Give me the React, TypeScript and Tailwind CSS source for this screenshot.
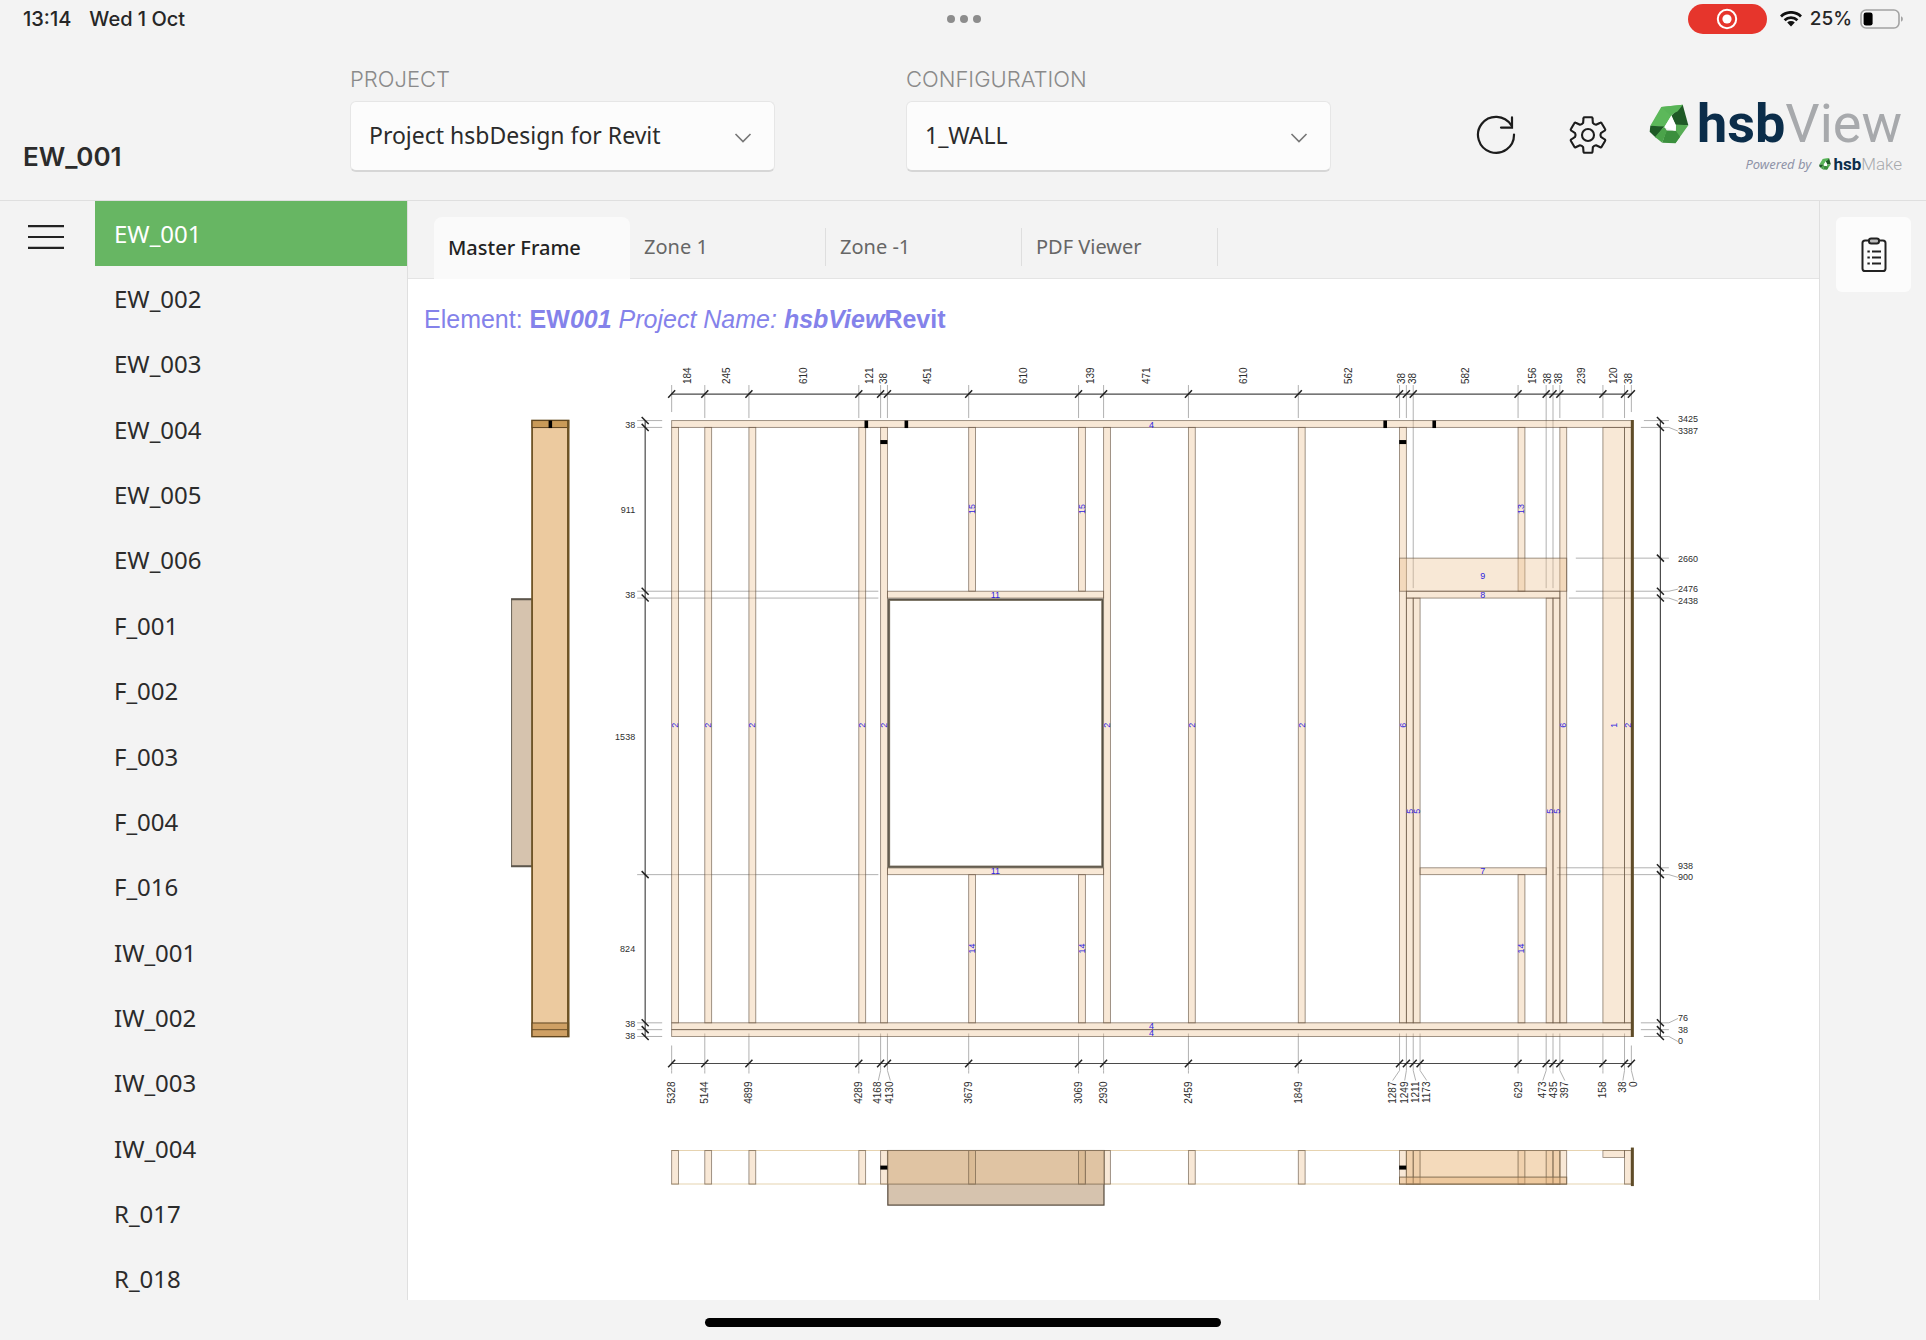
import React from "react";

const ELEMENTS = [
  "EW_001", "EW_002", "EW_003", "EW_004", "EW_005", "EW_006",
  "F_001", "F_002", "F_003", "F_004", "F_016",
  "IW_001", "IW_002", "IW_003", "IW_004", "R_017", "R_018",
];

const TABS = ["Zone 1", "Zone -1", "PDF Viewer"];

/* ---------- icons ---------- */

function WifiIcon() {
  return (
    <svg viewBox="0 0 22 16" className="h-4 w-[22px]" aria-hidden="true">
      <g fill="none" stroke="#111" strokeWidth="2.8">
        <path d="M1 5.4A14.4 14.4 0 0 1 21 5.4" />
        <path d="M4.6 9.2A9.2 9.2 0 0 1 17.4 9.2" />
      </g>
      <path d="M7.2 11.6A5.6 5.6 0 0 1 14.8 11.6L11 15.6Z" fill="#111" />
    </svg>
  );
}

function BatteryIcon() {
  return (
    <svg viewBox="0 0 44 20" className="h-5 w-11" aria-hidden="true">
      <rect x="1" y="1" width="38" height="18" rx="5" fill="none" stroke="#a3a3a3" strokeWidth="1.6" />
      <rect x="3.6" y="3.4" width="9" height="13.2" rx="2.4" fill="#000" />
      <path d="M41 7.2a3 3 0 0 1 0 5.6z" fill="#a3a3a3" />
    </svg>
  );
}

function RefreshIcon() {
  return (
    <svg viewBox="0 0 40 40" className="size-10" fill="none" stroke="#1c1c1c" strokeWidth="2.2" strokeLinecap="round" aria-hidden="true">
      <path d="M38 19.5A18 18 0 1 1 35.2 10.2" />
      <path d="M36 2.4V12.6H25" />
    </svg>
  );
}

function gearPath() {
  const pts: string[] = [];
  const at = (r: number, deg: number) => {
    const a = (deg * Math.PI) / 180;
    return `${(20 + r * Math.cos(a)).toFixed(2)} ${(20 + r * Math.sin(a)).toFixed(2)}`;
  };
  for (let k = 0; k < 6; k++) {
    const c = -90 + 60 * k;
    pts.push(
      `${k === 0 ? "M" : "L"}${at(13, c - 22)}`,
      `L${at(17.4, c - 15)}`,
      `Q${at(18.4, c - 14)} ${at(18, c - 10)}`,
      `L${at(18, c + 10)}`,
      `Q${at(18.4, c + 14)} ${at(17.4, c + 15)}`,
      `L${at(13, c + 22)}`,
      `Q${at(12, c + 30)} ${at(13, c + 38)}`,
    );
  }
  return pts.join("") + "Z";
}

function GearIcon() {
  return (
    <svg viewBox="0 0 40 40" className="size-10" fill="none" stroke="#1c1c1c" strokeWidth="2.1" strokeLinejoin="round" aria-hidden="true">
      <path d={gearPath()} />
      <circle cx="20" cy="20" r="6" />
    </svg>
  );
}

function ChecklistIcon() {
  return (
    <svg viewBox="0 0 26 36" className="h-9 w-[26px]" fill="none" stroke="#222" strokeWidth="2" aria-hidden="true">
      <rect x="1.5" y="3.5" width="23" height="30.5" rx="2.6" />
      <rect x="8" y="1.4" width="10" height="5" rx="2.2" fill="#bbb" />
      <path d="M11 14.5h9M11 20.5h9M11 26.5h9" />
      <path d="M6.4 14.5h2.4M6.4 20.5h2.4M6.4 26.5h2.4" />
    </svg>
  );
}

function Mark({ className }: { className: string }) {
  return (
    <svg viewBox="38 56 121 121" className={className} aria-hidden="true">
      <path d="M75 65L140 58L105 92L84 126L42 122Z" fill="#5cb85a" />
      <path d="M140 58L157 120L120 120L105 92Z" fill="#1f5a26" />
      <path d="M140 58L125 78L108 86L105 92L75 65Z" fill="#58b457" />
      <path d="M157 120L118 175L100 140L119 137L120 118Z" fill="#57ad55" />
      <path d="M90 136L119 137L132 155L118 175L78 173Z" fill="#3b8f3d" />
      <path d="M42 122L84 124L58 157L40 140Z" fill="#1f5a26" />
      <path d="M84 124L92 137L78 173L56 156Z" fill="#4ba34a" />
      <path d="M106 90L119 122L119 138L84 127Z" fill="#fff" />
    </svg>
  );
}

function Logo() {
  return (
    <div className="flex flex-col items-end font-[Roboto,sans-serif] leading-none">
      <div className="flex items-center gap-2">
        <Mark className="size-10" />
        <div className="text-[54px] leading-[48px] text-[#a7a9ac]">
          <span className="font-bold text-[#0b2d4a]">hsb</span>
          <span className="font-normal">View</span>
        </div>
      </div>
      <div className="mt-2 flex items-center gap-2">
        <span className="font-['Noto_Sans',sans-serif] text-[13px] leading-4 text-[#8f93a8] italic">Powered by</span>
        <div className="flex items-center gap-[2px]">
          <Mark className="size-3" />
          <div className="text-[17px] leading-4 text-[#a7a9ac]">
            <span className="font-bold text-[#0b2d4a]">hsb</span>
            <span className="font-light">Make</span>
          </div>
        </div>
      </div>
    </div>
  );
}

/* ---------- header parts ---------- */

function Picker({ id, label, value }: { id: string; label: string; value: string }) {
  return (
    <div className="w-[425px]">
      <label htmlFor={id} className="block font-[Inter,sans-serif] text-[22px] leading-7 font-light text-[#8a8a8a]">
        {label}
      </label>
      <div className="relative mt-2">
        <select
          id={id}
          className="h-[71px] w-full appearance-none rounded-md border border-b-2 border-[#e6e6e6] border-b-[#d6d6d6] bg-[#fcfcfc] px-[18px] pb-[2px] text-[23px] text-[#2b2b2b]"
        >
          <option>{value}</option>
        </select>
        <svg viewBox="0 0 18 10" className="pointer-events-none absolute top-8 right-[23px] h-[10px] w-[18px]" fill="none" stroke="#777" strokeWidth="1.6" aria-hidden="true">
          <path d="M1.5 1L9 8.6L16.5 1" />
        </svg>
      </div>
    </div>
  );
}

/* ---------- drawing ---------- */

/* Millimetres on the wall to units of the drawing sheet. */
const X = (mm: number) => 1630.5 - 0.18 * mm;
const Y = (mm: number) => 1036 - 0.1797 * mm;

const WOOD = "rgba(236,190,140,0.36)";
const EDGE = "rgba(95,78,60,0.66)";

function Beam({ l, r, t, b }: { l: number; r: number; t: number; b: number }) {
  return <rect x={X(l)} y={Y(t)} width={X(r) - X(l)} height={Y(b) - Y(t)} fill={WOOD} stroke={EDGE} strokeWidth="0.9" />;
}

const GRID = [5328, 5144, 4899, 4289, 4168, 4130, 3679, 3069, 2930, 2459, 1849, 1287, 1249, 1211, 629, 473, 435, 397, 158, 38, 0];
const TOP_LABELS: [number, string][] = [
  [688, "184"], [727, "245"], [804, "610"], [870, "121"], [884, "38"], [928, "451"], [1024, "610"],
  [1091, "139"], [1146, "471"], [1243, "610"], [1348, "562"], [1401, "38"], [1412, "38"], [1465, "582"],
  [1532, "156"], [1547, "38"], [1558, "38"], [1581, "239"], [1613, "120"], [1628, "38"],
];
const BOTTOM: [number, number][] = [
  [5328, 672], [5144, 705], [4899, 749], [4289, 859], [4168, 878], [4130, 890], [3679, 969], [3069, 1079],
  [2930, 1104], [2459, 1188], [1849, 1298], [1287, 1392], [1249, 1404], [1211, 1415], [1173, 1426],
  [629, 1518], [473, 1542], [435, 1553], [397, 1564], [158, 1602], [38, 1622], [0, 1633],
];
const LEFT_MARKS: [number, number][] = [[3425, 662], [3387, 662], [2476, 878], [2438, 878], [900, 878], [76, 662], [38, 662], [0, 662]];
const LEFT_LABELS: [number, string][] = [[425, "38"], [510, "911"], [595, "38"], [737, "1538"], [949, "824"], [1024, "38"], [1036, "38"]];
const RIGHT: [number, number, number][] = [
  [3425, 1643, 419], [3387, 1640, 431], [2660, 1575, 559], [2476, 1575, 589], [2438, 1568, 601],
  [938, 1556, 866], [900, 1556, 877], [76, 1640, 1018], [38, 1640, 1030], [0, 1643, 1041],
];
const STUDS = [5328, 5144, 4899, 4289, 4168, 2930, 2459, 1849, 38];
const UPRIGHT_TAGS: [number, number, string][] = [
  ...STUDS.map((s): [number, number, string] => [X(s - 19), 725, "2"]),
  [X(3660), 509, "15"], [X(3050), 509, "15"], [X(610), 509, "13"],
  [X(3660), 948, "14"], [X(3050), 948, "14"], [X(610), 948, "14"],
  [X(1268), 725, "6"], [X(378), 725, "6"], [1613, 725, "1"],
  [1409, 811, "5"], [1416, 811, "5"], [1549, 811, "5"], [1556, 811, "5"],
];
const FLAT_TAGS: [number, number, string][] = [
  [1151, 425, "4"], [1151, 1026, "4"], [1151, 1033, "4"], [995, 595, "11"], [995, 871, "11"],
  [1482, 576, "9"], [1482, 595, "8"], [1482, 871, "7"],
];

function WallDrawing() {
  return (
    <svg viewBox="408 356 1410 860" className="block h-auto w-full font-['Liberation_Sans',Arial,sans-serif]" role="img" aria-label="Wall EW001 framing elevation">
      {/* side view */}
      <rect x="511.5" y="599" width="20.5" height="267" fill="#d6c3ae" stroke="#6b6257" strokeWidth="1" />
      <path d="M511 599H532M511 866H532" stroke="#5c564c" strokeWidth="2" />
      <rect x="532" y="420.5" width="36.5" height="615.5" fill="#ecca9f" stroke="#6f5426" strokeWidth="1.8" />
      <rect x="532" y="420.5" width="36.5" height="7" fill="#c99a58" stroke="#5e4520" />
      <rect x="532" y="1022.5" width="36.5" height="13.5" fill="#cfa064" stroke="#5e4520" />
      <path d="M532 1029.2H568.5" stroke="#5e4520" strokeWidth="0.9" />
      <path d="M567.8 421V1036" stroke="#6f5426" strokeWidth="1.8" />
      <rect x="548.5" y="420.5" width="3.5" height="7.5" fill="#000" />

      {/* extension lines */}
      <g stroke="#a8a8a8" strokeWidth="0.9" fill="none">
        {GRID.map((g) => (
          <path key={g} d={`M${X(g)} 385V${g === 5328 || g === 0 ? 412 : g === 1211 || g === 473 || g === 435 ? 588 : 418}`} />
        ))}
        {BOTTOM.map(([g, lx]) => (
          <path key={g} d={`M${X(g)} ${g === 5328 || g === 0 ? 1045 : 1033}V1070${Math.abs(lx - X(g)) > 1.6 ? `L${lx} 1080` : "V1073"}`} />
        ))}
        {LEFT_MARKS.map(([v, e]) => (
          <path key={v} d={`M637 ${Y(v)}H${e}`} />
        ))}
        {RIGHT.map(([v, s, ly]) => (
          <path key={v} d={`M${s} ${Y(v)}H1668${Math.abs(ly - Y(v)) > 1.6 ? `L1677 ${ly}` : ""}`} />
        ))}
      </g>

      {/* dimension lines with slashes */}
      <g stroke="#4a4a4a" strokeWidth="1.2">
        <path d={`M${X(5328)} 394H${X(0)}M${X(5328)} 1063H${X(0)}M645 ${Y(3425)}V${Y(0)}M1659.5 ${Y(3425)}V${Y(0)}`} />
      </g>
      <g stroke="#222" strokeWidth="1.5">
        {GRID.map((g) => (
          <path key={g} d={`M${X(g) - 3.5} 397.7l7 -7.4`} />
        ))}
        {BOTTOM.map(([g]) => (
          <path key={g} d={`M${X(g) - 3.5} 1066.7l7 -7.4`} />
        ))}
        {LEFT_MARKS.map(([v]) => (
          <path key={v} d={`M641.5 ${Y(v) - 3.5}l7 7`} />
        ))}
        {RIGHT.map(([v]) => (
          <path key={v} d={`M1656 ${Y(v) - 3.5}l7 7`} />
        ))}
      </g>

      {/* timbers */}
      <Beam l={5328} r={0} t={3425} b={3387} />
      <Beam l={5328} r={0} t={76} b={38} />
      <Beam l={5328} r={0} t={38} b={0} />
      {STUDS.map((s) => (
        <Beam key={s} l={s} r={s - 38} t={3387} b={76} />
      ))}
      {[1287, 397].map((s) => (
        <Beam key={s} l={s} r={s - 38} t={3387} b={76} />
      ))}
      {[3679, 3069, 629].map((s) => (
        <g key={s}>
          <Beam l={s} r={s - 38} t={3387} b={2476} />
          <Beam l={s} r={s - 38} t={900} b={76} />
        </g>
      ))}
      {[1249, 1211, 473, 435].map((s) => (
        <Beam key={s} l={s} r={s - 38} t={2438} b={76} />
      ))}
      <Beam l={4130} r={2930} t={2476} b={2438} />
      <Beam l={4130} r={2930} t={938} b={900} />
      <Beam l={1287} r={359} t={2660} b={2476} />
      <Beam l={1249} r={397} t={2476} b={2438} />
      <Beam l={1173} r={473} t={938} b={900} />
      <Beam l={158} r={38} t={3387} b={76} />
      <rect x="888.5" y="599.5" width="213.5" height="267" fill="none" stroke="#82796a" strokeWidth="2.6" />
      <rect x="888.5" y="599.5" width="213.5" height="267" fill="none" stroke="#4d463b" strokeWidth="0.8" />
      <path d="M1631.5 420V1036.5" stroke="#5f4c28" strokeWidth="3" />

      {/* holes */}
      <g fill="#000">
        {[866, 906, 1384.5, 1433.5].map((x) => (
          <rect key={x} x={x - 1.8} y="420.5" width="3.6" height="7.5" />
        ))}
        {[883.5, 1402].map((x) => (
          <rect key={x} x={x - 3.5} y="440" width="7" height="4" />
        ))}
      </g>

      {/* plan view */}
      <path d="M671 1150H1631M671 1183.5H1631" stroke="#e6d3b0" strokeWidth="1" />
      {[5328, 5144, 4899, 4289, 4168, 2930, 2459, 1849, 1287, 397, 38].map((s) => (
        <rect key={s} x={X(s)} y="1150" width="6.8" height="33.5" fill={WOOD} stroke={EDGE} strokeWidth="0.9" />
      ))}
      <rect x="887.5" y="1150" width="216" height="54.5" fill="#d6c3ae" stroke="#55493b" strokeWidth="1.2" />
      <rect x="887.5" y="1150" width="216" height="33.5" fill="#e0c4a3" stroke="#8b765c" strokeWidth="0.9" />
      {[3679, 3069].map((s) => (
        <rect key={s} x={X(s)} y="1150" width="6.8" height="33.5" fill="rgba(205,165,120,0.3)" stroke="#8b765c" strokeWidth="0.9" />
      ))}
      <path d={`M${X(3031)} 1150V1183.5`} stroke="#8b765c" strokeWidth="0.9" />
      <rect x={X(1249)} y="1150" width={X(397) - X(1249)} height="33.5" fill="#f4dabb" stroke="#8b765c" strokeWidth="0.9" />
      {[1249, 1211, 473, 435, 629].map((s) => (
        <rect key={s} x={X(s)} y="1150" width="6.8" height="33.5" fill="rgba(225,175,120,0.2)" stroke="#8b765c" strokeWidth="0.9" />
      ))}
      <rect x={X(1287)} y="1176.5" width={X(359) - X(1287)} height="7" fill="rgba(230,175,115,0.4)" stroke="#7a664c" strokeWidth="0.9" />
      <rect x={X(158)} y="1150" width="21.6" height="7" fill={WOOD} stroke={EDGE} strokeWidth="0.8" />
      <path d="M1631.5 1147V1185.5" stroke="#5f4c28" strokeWidth="3" />
      <rect x="880" y="1165" width="7" height="4" fill="#000" />
      <rect x="1398.5" y="1165" width="7" height="4" fill="#000" />

      {/* dimension texts */}
      <g fill="#2e2e2e" className="text-[10px]">
        {TOP_LABELS.map(([x, t]) => (
          <text key={x} transform={`translate(${x + 3} 384) rotate(-90)`}>{t}</text>
        ))}
        {BOTTOM.map(([v, x]) => (
          <text key={v} textAnchor="end" transform={`translate(${x + 3} 1081) rotate(-90)`}>{v}</text>
        ))}
      </g>
      <g fill="#2e2e2e" className="text-[9px]">
        {LEFT_LABELS.map(([y, t]) => (
          <text key={y} x="635" y={y + 3} textAnchor="end">{t}</text>
        ))}
        {RIGHT.map(([v, , y]) => (
          <text key={v} x="1677" y={y + 3}>{v}</text>
        ))}
      </g>

      {/* part numbers */}
      <g fill="#2f1fe0" textAnchor="middle" className="text-[9px]">
        {UPRIGHT_TAGS.map(([x, y, t]) => (
          <text key={`${x}-${y}`} transform={`translate(${x + 3} ${y}) rotate(-90)`}>{t}</text>
        ))}
        {FLAT_TAGS.map(([x, y, t]) => (
          <text key={`${x}-${y}`} x={x} y={y + 3}>{t}</text>
        ))}
      </g>
    </svg>
  );
}

/* ---------- page ---------- */

export default function App() {
  return (
    <div className="flex min-h-screen flex-col bg-[#f3f3f3] font-['Noto_Sans',sans-serif] text-[#2b2b2b]">
      <div className="grid h-[38px] grid-cols-3 items-center pr-[22px] pl-[23px] font-[Inter,sans-serif] text-[19px] font-medium text-[#262626]">
        <div className="flex gap-[18px] text-[20px]">
          <span>13:14</span>
          <span>Wed 1 Oct</span>
        </div>
        <div className="flex justify-center gap-[5px]">
          <span className="size-2 rounded-full bg-[#8c8c8c]" />
          <span className="size-2 rounded-full bg-[#8c8c8c]" />
          <span className="size-2 rounded-full bg-[#8c8c8c]" />
        </div>
        <div className="flex items-center justify-end">
          <span className="mr-[13px] flex h-[30px] w-[79px] items-center justify-center rounded-full bg-[#e6352c]">
            <svg viewBox="0 0 22 22" className="size-[22px]" aria-hidden="true">
              <circle cx="11" cy="11" r="9.2" fill="none" stroke="#fff" strokeWidth="2" />
              <circle cx="11" cy="11" r="4.6" fill="#fff" />
            </svg>
          </span>
          <WifiIcon />
          <span className="mr-2 ml-2">25%</span>
          <BatteryIcon />
        </div>
      </div>

      <header className="flex h-[163px] border-b border-[#dfdfdf] pr-[24px]">
        <h1 className="w-[350px] shrink-0 self-end pb-[27px] pl-[23px] font-[Inter,sans-serif] text-[26px] leading-8 font-semibold">EW_001</h1>
        <div className="flex gap-[131px] pt-[27px]">
          <Picker id="project" label="PROJECT" value="Project hsbDesign for Revit" />
          <Picker id="configuration" label="CONFIGURATION" value="1_WALL" />
        </div>
        <div className="ml-auto flex pt-[62px]">
          <div className="mt-[15px] mr-[41px] flex items-start gap-[52px]">
            <button type="button" aria-label="Refresh"><RefreshIcon /></button>
            <button type="button" aria-label="Settings"><GearIcon /></button>
          </div>
          <Logo />
        </div>
      </header>

      <div className="flex flex-1">
        <div className="w-[95px] shrink-0">
          <button type="button" aria-label="Menu" className="flex h-[72px] w-full items-center pl-7">
            <svg viewBox="0 0 36 24" className="h-6 w-9" stroke="#222" strokeWidth="2.2" aria-hidden="true">
              <path d="M0 1.2H36M0 12H36M0 22.8H36" />
            </svg>
          </button>
        </div>

        <nav aria-label="Elements" className="flex w-[312px] shrink-0 flex-col">
          {ELEMENTS.map((name, i) => (
            <a
              key={name}
              href={`#${name}`}
              className={
                i === 0
                  ? "flex min-h-[65px] flex-1 items-center bg-[#67b663] px-[19px] text-[24px] leading-8 text-white"
                  : "flex min-h-[65px] flex-1 items-center px-[19px] text-[24px] leading-8"
              }
            >
              {name}
            </a>
          ))}
        </nav>

        <main className="mb-3 flex min-w-0 flex-1 flex-col border-x border-[#dfdfdf] bg-white">
          <div role="tablist" className="flex h-[78px] items-end border-b border-[#e4e4e4] bg-[#f3f3f3] pl-[26px] text-[20px]">
            <button type="button" role="tab" aria-selected="true" className="-mb-px h-[62px] w-[196px] rounded-t-lg bg-[#fafafa] pl-[14px] text-left font-medium text-[#222]">
              Master Frame
            </button>
            {TABS.map((t) => (
              <button key={t} type="button" role="tab" aria-selected="false" className="mb-3 h-[38px] w-[196px] border-r border-[#dedede] pl-[14px] text-left text-[#666]">
                {t}
              </button>
            ))}
          </div>
          <p className="px-4 pt-[26px] pb-[23px] font-['Liberation_Sans',Arial,sans-serif] text-[25px] leading-7 text-[#8482ea]">
            Element: <b>EW<i>001</i></b> <i>Project Name: <b>hsbView</b></i><b>Revit</b>
          </p>
          <WallDrawing />
        </main>

        <aside className="w-[106px] shrink-0 pt-4 pl-4">
          <button type="button" aria-label="Checklist" className="flex size-[75px] items-center justify-center rounded-md bg-[#fcfcfc]">
            <ChecklistIcon />
          </button>
        </aside>
      </div>

      <footer className="flex h-7 items-start justify-center pt-[6px]">
        <div className="h-[9px] w-[516px] rounded-full bg-black" />
      </footer>
    </div>
  );
}
